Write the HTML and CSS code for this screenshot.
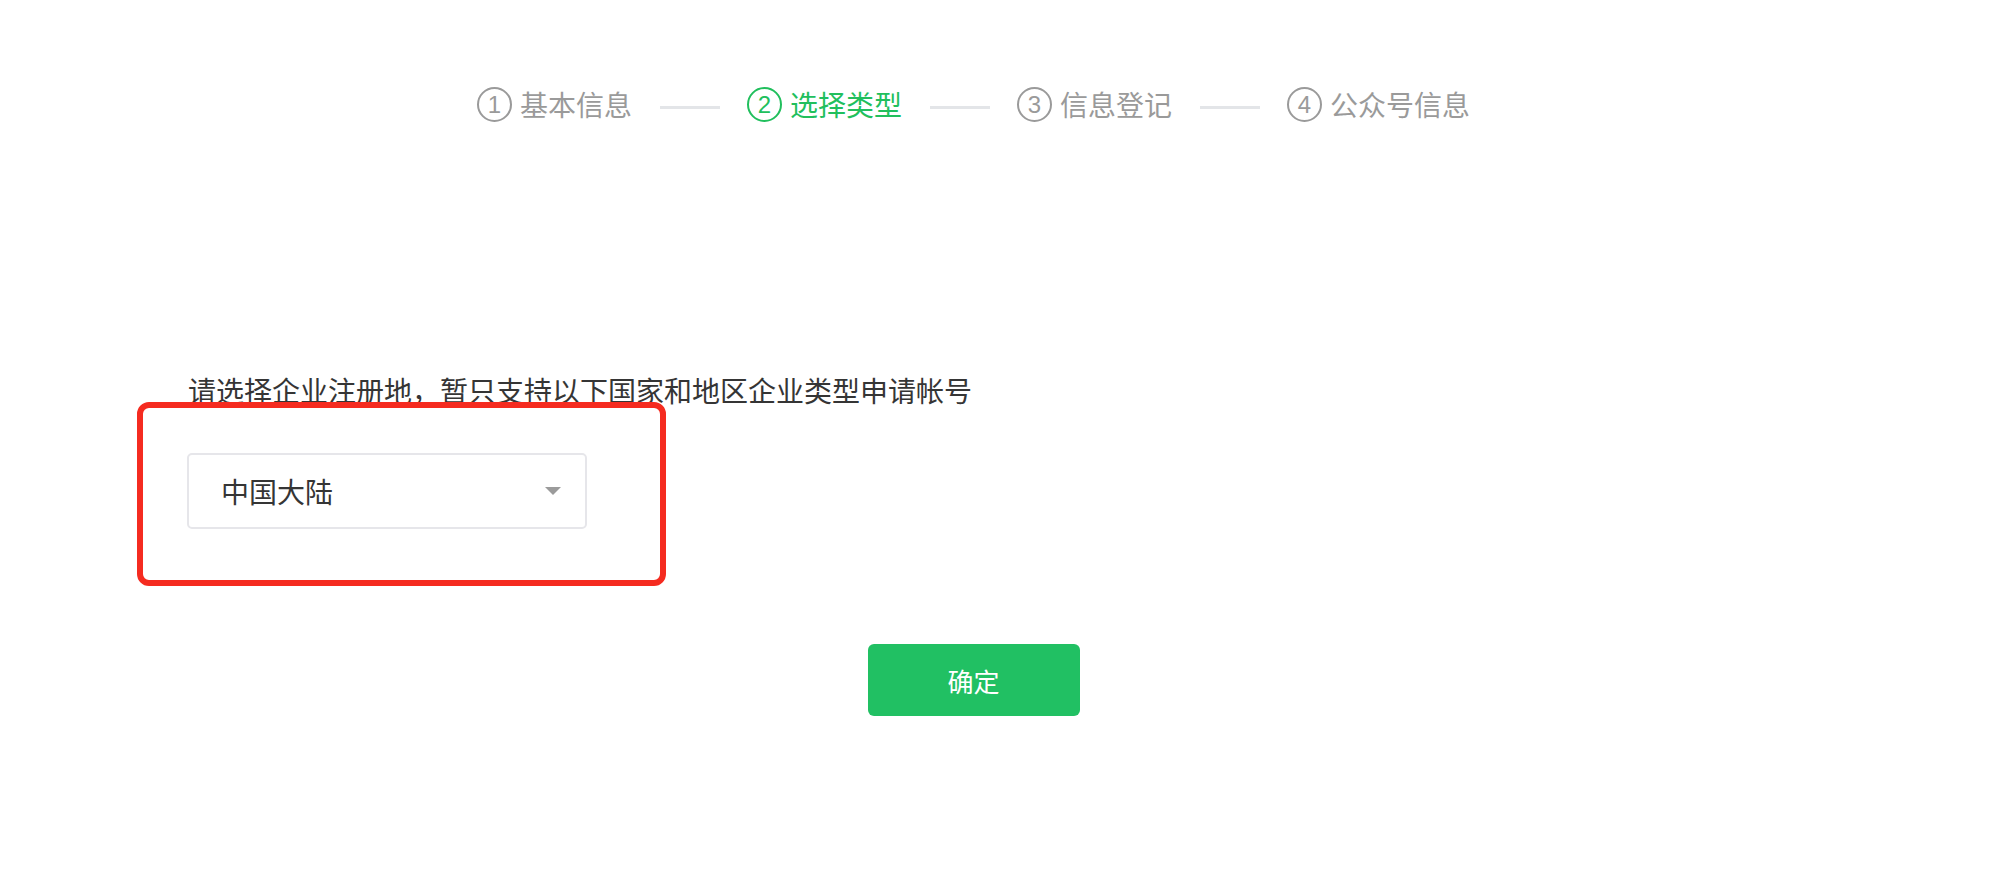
FILE: index.html
```html
<!DOCTYPE html>
<html lang="zh-CN">
<head>
  <meta charset="UTF-8" />
  <meta name="viewport" content="width=device-width, initial-scale=1.0" />
  <title>选择类型</title>
  <link rel="stylesheet" href="styles.css">
</head>
<body>
  <div class="page">
    <!-- 步骤条 -->
    <div class="steps">
      <div class="step"><span class="num">1</span><span>基本信息</span></div>
      <div class="sep"></div>
      <div class="step active"><span class="num">2</span><span>选择类型</span></div>
      <div class="sep"></div>
      <div class="step"><span class="num">3</span><span>信息登记</span></div>
      <div class="sep"></div>
      <div class="step"><span class="num">4</span><span>公众号信息</span></div>
    </div>

    <div class="form">
      <p class="tip">请选择企业注册地，暂只支持以下国家和地区企业类型申请帐号</p>
      <div class="mark">
        <div class="select">
          <span>中国大陆</span>
          <i class="arrow"></i>
        </div>
      </div>
    </div>

    <div class="actions">
      <button class="btn">确定</button>
    </div>
  </div>
</body>
</html>
```

FILE: styles.css
```css
body {
  margin: 0;
  background: #fff;
  color: #353535;
  font-family: "Noto Sans CJK SC", "Noto Sans", sans-serif;
}
.page {
  width: 1947px;
}
.steps {
  display: flex;
  justify-content: center;
  align-items: center;
  padding-top: 87px;
}
.step {
  display: flex;
  align-items: center;
  gap: 8px;
  color: #9a9a9a;
  font-size: 28px;
  line-height: 35px;
}
.step.active {
  color: #21bf5d;
}
.num {
  box-sizing: border-box;
  width: 35px;
  height: 35px;
  border: 2px solid currentColor;
  border-radius: 50%;
  display: flex;
  align-items: center;
  justify-content: center;
  font-family: "Liberation Sans", "Noto Sans", sans-serif;
  font-size: 24px;
  line-height: 1;
}
.sep {
  width: 60px;
  height: 3px;
  background: #e3e5e8;
  margin: 6px 27px 0 28px;
}
.form {
  margin-top: 248px;
  padding-left: 188px;
}
.tip {
  margin: 0;
  font-size: 28px;
  line-height: 40px;
  color: #353535;
}
.mark {
  display: inline-block;
  margin: -8px 0 0 -51px;
  padding: 45px 73px 51px 44px;
  border: 6px solid #f52b20;
  border-radius: 12px;
}
.select {
  box-sizing: border-box;
  width: 400px;
  height: 76px;
  padding: 0 24px 0 32px;
  border: 2px solid #e6e6ea;
  border-radius: 5px;
  display: flex;
  align-items: center;
  justify-content: space-between;
  font-size: 28px;
  color: #353535;
}
.arrow {
  width: 0;
  height: 0;
  border-left: 8px solid transparent;
  border-right: 8px solid transparent;
  border-top: 8px solid #9b9b9b;
}
.actions {
  display: flex;
  justify-content: center;
  margin-top: 58px;
}
.btn {
  width: 212px;
  height: 72px;
  border: none;
  border-radius: 6px;
  background: #21c063;
  color: #fff;
  font-family: inherit;
  font-size: 26px;
  cursor: pointer;
}
```
